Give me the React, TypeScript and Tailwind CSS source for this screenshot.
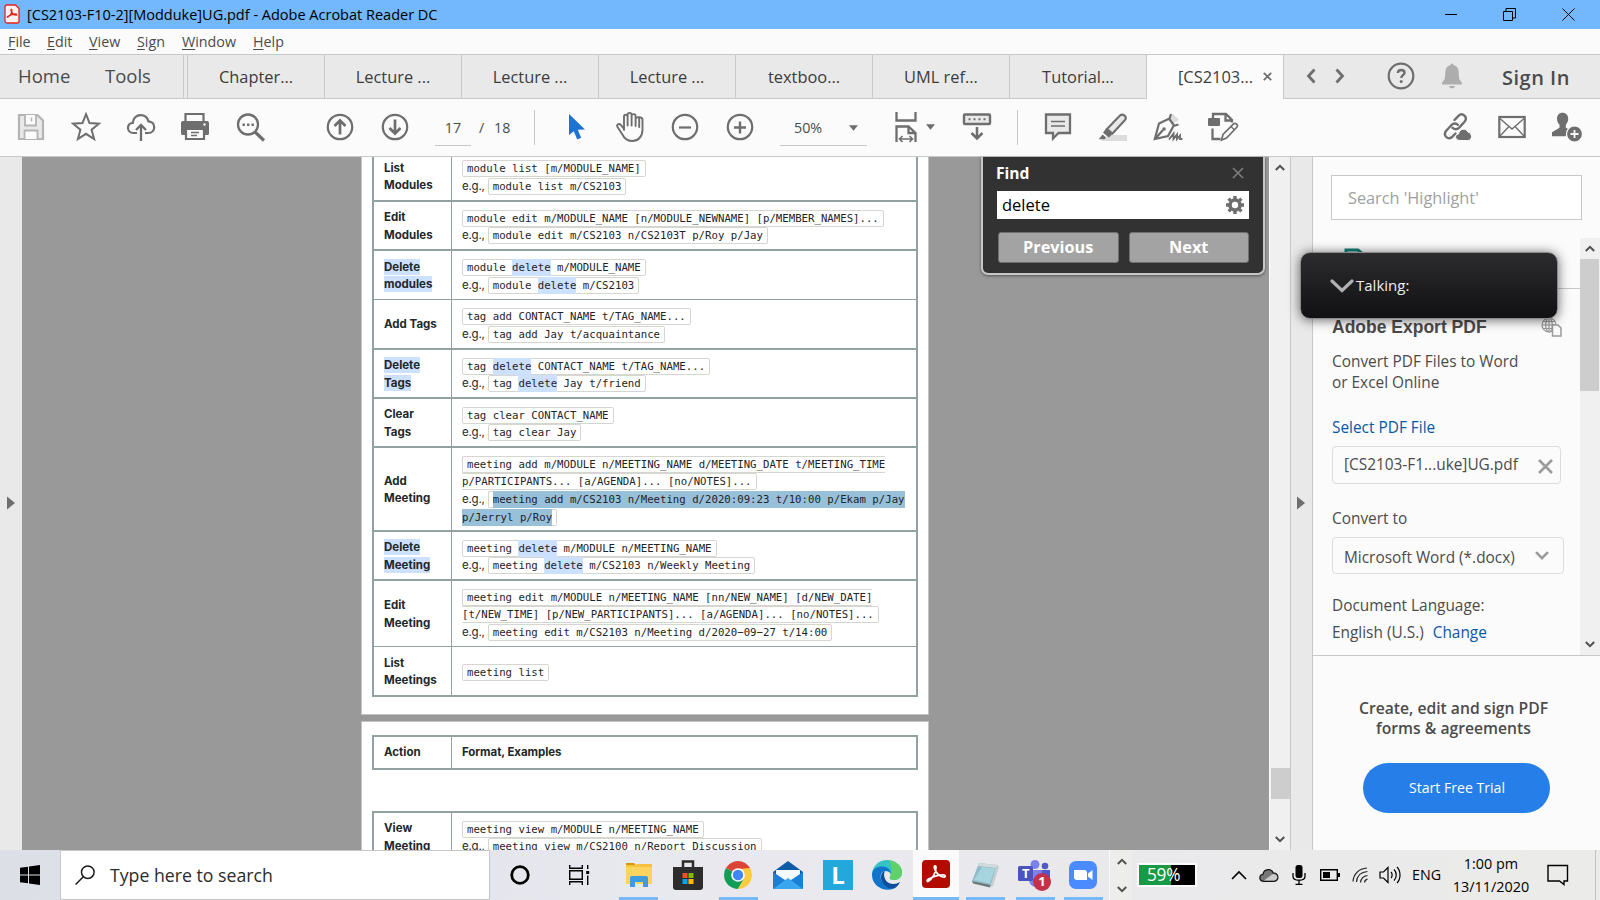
import type { ReactNode } from "react";

const G = "#6e6e6e";

type SvgProps = { w: number; h: number; cls?: string; children: ReactNode };
const Svg = ({ w, h, cls = "", children }: SvgProps) => (
  <svg width={w} height={h} viewBox={`0 0 ${w} ${h}`} fill="none" className={`block shrink-0 ${cls}`}>
    {children}
  </svg>
);

const Hit = ({ children }: { children: ReactNode }) => <span className="bg-[#cce0ff] py-[2px]">{children}</span>;
const Sel = ({ children }: { children: ReactNode }) => <span className="bg-[#99c0d9] py-[2px]">{children}</span>;
const Code = ({ children }: { children: ReactNode }) => (
  <code className="rounded-[2px] border border-[#d6d6d0] px-[4px] py-px font-['DejaVu_Sans_Mono',monospace] text-[10.700px] leading-[10px] text-[#1f2428]">
    {children}
  </code>
);
const Eg = () => <span className="mr-[3px] font-['Inter',sans-serif] text-[11.5px] tracking-[-0.2px]">e.g.,</span>;

type Row = { label: string[]; hit?: boolean; cls: string; body: ReactNode };

const rows: Row[] = [
  {
    label: ["List", "Modules"],
    cls: "h-[50px] border-b-2",
    body: (<><Code>module list [m/MODULE_NAME]</Code><br /><Eg /><Code>module list m/CS2103</Code></>),
  },
  {
    label: ["Edit", "Modules"],
    cls: "h-[49px] border-b-2",
    body: (<><Code>module edit m/MODULE_NAME [n/MODULE_NEWNAME] [p/MEMBER_NAMES]...</Code><br /><Eg /><Code>module edit m/CS2103 n/CS2103T p/Roy p/Jay</Code></>),
  },
  {
    label: ["Delete", "modules"],
    hit: true,
    cls: "h-[49px] border-b",
    body: (<><Code>module <Hit>delete</Hit> m/MODULE_NAME</Code><br /><Eg /><Code>module <Hit>delete</Hit> m/CS2103</Code></>),
  },
  {
    label: ["Add Tags"],
    cls: "h-[50px] border-b-2",
    body: (<><Code>tag add CONTACT_NAME t/TAG_NAME...</Code><br /><Eg /><Code>tag add Jay t/acquaintance</Code></>),
  },
  {
    label: ["Delete", "Tags"],
    hit: true,
    cls: "h-[49px] border-b-2",
    body: (<><Code>tag <Hit>delete</Hit> CONTACT_NAME t/TAG_NAME...</Code><br /><Eg /><Code>tag <Hit>delete</Hit> Jay t/friend</Code></>),
  },
  {
    label: ["Clear", "Tags"],
    cls: "h-[49px] border-b-2",
    body: (<><Code>tag clear CONTACT_NAME</Code><br /><Eg /><Code>tag clear Jay</Code></>),
  },
  {
    label: ["Add", "Meeting"],
    cls: "h-[84px] border-b-2",
    body: (
      <>
        <Code>meeting add m/MODULE n/MEETING_NAME d/MEETING_DATE t/MEETING_TIME<br />p/PARTICIPANTS... [a/AGENDA]... [no/NOTES]...</Code>
        <br /><Eg />
        <Code><Sel>meeting add m/CS2103 n/Meeting d/2020:09:23 t/10:00 p/Ekam p/Jay<br />p/Jerryl p/Roy</Sel></Code>
      </>
    ),
  },
  {
    label: ["Delete", "Meeting"],
    hit: true,
    cls: "h-[49px] border-b-2",
    body: (<><Code>meeting <Hit>delete</Hit> m/MODULE n/MEETING_NAME</Code><br /><Eg /><Code>meeting <Hit>delete</Hit> m/CS2103 n/Weekly Meeting</Code></>),
  },
  {
    label: ["Edit", "Meeting"],
    cls: "h-[66px] border-b",
    body: (
      <>
        <Code>meeting edit m/MODULE n/MEETING_NAME [nn/NEW_NAME] [d/NEW_DATE]<br />[t/NEW_TIME] [p/NEW_PARTICIPANTS]... [a/AGENDA]... [no/NOTES]...</Code>
        <br /><Eg /><Code>meeting edit m/CS2103 n/Meeting d/2020−09−27 t/14:00</Code>
      </>
    ),
  },
  { label: ["List", "Meetings"], cls: "h-[50px] border-b-2", body: <Code>meeting list</Code> },
];

const TableRow = ({ label, hit, cls, body }: Row) => (
  <div className={`flex shrink-0 border-[#93a1a1] ${cls}`}>
    <div className="flex w-[78px] shrink-0 flex-col justify-center border-r border-[#93a1a1] pl-[10px] pt-[2px] font-['Inter',sans-serif] text-[11.5px] font-bold leading-[17.2px] text-[#22272b]">
      {label.map((l) => (
        <div key={l}><span className={hit ? "bg-[#cce0ff] py-px" : ""}>{l}</span></div>
      ))}
    </div>
    <div className="flex items-center whitespace-nowrap pl-[10px] pt-[2px] text-[11.5px] leading-[17.2px] text-[#24292e]">
      <div>{body}</div>
    </div>
  </div>
);

const Pages = () => (
  <div className="flex h-full w-[568px] flex-col">
    <div className="flex h-[558px] shrink-0 flex-col overflow-hidden border-x border-b border-[#c4c4c4] bg-white px-[10px]">
      <div className="-mt-[5px] border-x-2 border-[#93a1a1]">
        {rows.map((r, i) => <TableRow key={i} {...r} />)}
      </div>
    </div>
    <div className="mt-[6px] flex min-h-0 flex-1 flex-col overflow-hidden border-x border-t border-[#c4c4c4] bg-white px-[10px] pt-[13px]">
      <div className="flex h-[35px] shrink-0 border-2 border-[#93a1a1] font-['Inter',sans-serif] text-[11.5px] font-bold text-[#22272b]">
        <div className="flex w-[78px] items-center border-r border-[#93a1a1] pl-[10px]">Action</div>
        <div className="flex items-center pl-[10px] tracking-[-0.05px]">Format, Examples</div>
      </div>
      <div className="mt-[41px] shrink-0 border-x-2 border-t-2 border-[#93a1a1]">
        <TableRow label={["View", "Meeting"]} cls="h-[49px] border-b-2" body={<><Code>meeting view m/MODULE n/MEETING_NAME</Code><br /><Eg /><Code>meeting view m/CS2100 n/Report Discussion</Code></>} />
      </div>
    </div>
  </div>
);

const ScrollArrow = ({ up = false }: { up?: boolean }) => (
  <Svg w={10} h={7}>
    <path d={up ? "M0.8 6L5 1.8L9.2 6" : "M0.8 1L5 5.2L9.2 1"} stroke="#505050" strokeWidth="2" />
  </Svg>
);

const TitleBar = () => (
  <header className="flex h-[29px] shrink-0 items-center bg-[#73b7fc] pl-[4px] text-black">
    <Svg w={16} h={20} cls="-mt-[1px]">
      <path d="M3 1h8.5L15 4.500V17a2 2 0 0 1-2 2H3a2 2 0 0 1-2-2V3a2 2 0 0 1 2-2Z" fill="#fff2f0" stroke="#e1251b" strokeWidth="1.300" />
      <path d="M3.800 13.200c2.300-1.200 4.300-4.800 4.100-7.200-.2-1.200-1.200-.8-.9.400.5 2.500 3 4.600 5 4.800 1.100 0 .8-1.200-.4-1.200-2.300 0-5 .8-7.600 2.200-.9.500-.8 1.200-.2 1Z" stroke="#e1251b" strokeWidth="1.300" />
    </Svg>
    <div className="ml-[7px] text-[14.500px]">[CS2103-F10-2][Modduke]UG.pdf - Adobe Acrobat Reader DC</div>
    <div className="ml-auto flex items-center pr-[25px]">
      <Svg w={12} h={12}><path d="M0 5.500h12" stroke="#000" /></Svg>
      <Svg w={13} h={13} cls="ml-[46px]"><path d="M.5 3.500h9v9h-9ZM3 3.500V.5h9.500V10H10" stroke="#000" /></Svg>
      <Svg w={13} h={13} cls="ml-[46px]"><path d="M.5.5l12 12M12.500.5l-12 12" stroke="#000" /></Svg>
    </div>
  </header>
);

const menu: [string, string, string][] = [
  ["F", "ile", "w-[39px]"], ["E", "dit", "w-[42px]"], ["V", "iew", "w-[48px]"],
  ["S", "ign", "w-[45px]"], ["W", "indow", "w-[71px]"], ["H", "elp", "w-[40px]"],
];

const MenuBar = () => (
  <nav className="flex h-[25px] shrink-0 items-center bg-[#fbfbfb] pl-[8px] text-[14.300px] text-[#4b4b4b]">
    {menu.map(([a, b, w]) => (
      <div key={b} className={`shrink-0 ${w}`}><span className="underline underline-offset-2">{a}</span>{b}</div>
    ))}
  </nav>
);

const tabs = ["Chapter...", "Lecture ...", "Lecture ...", "Lecture ...", "textboo...", "UML ref...", "Tutorial..."];

const TabBar = () => (
  <div className="flex h-[45px] shrink-0 border-t border-[#c8c8c8] bg-[#e9e9e9] text-[#4b4b4b]">
    <div className="flex w-[184px] shrink-0 items-center border-b border-r border-[#c8c8c8] pl-[18px] pb-[2px] text-[18.5px]">
      <span className="w-[87px]">Home</span><span>Tools</span>
    </div>
    <div className="w-[4px] shrink-0 border-b border-r border-[#c8c8c8]" />
    {tabs.map((t, i) => (
      <div key={i} className="flex w-[137px] shrink-0 items-center justify-center border-b border-r border-[#c8c8c8] pt-[2px] text-[16.4px] text-[#3c3c3c]">{t}</div>
    ))}
    <div className="flex w-[137px] shrink-0 items-center border-r border-[#c8c8c8] bg-[#fbfbfb] pl-[31px] text-[16.4px] text-[#3c3c3c]">
      <span className="w-[84px] pt-px">[CS2103...</span>
      <Svg w={9} h={9} cls="-mt-[2px] ml-px"><path d="M.8.8l7.400 7.400M8.200.8L.8 8.200" stroke={G} strokeWidth="1.800" /></Svg>
    </div>
    <div className="flex flex-1 items-center border-b border-[#c8c8c8]">
      <Svg w={10} h={16} cls="ml-[22px] -mt-[2px]"><path d="M8.500 1.500L2.500 8l6 6.500" stroke={G} strokeWidth="2.800" /></Svg>
      <Svg w={10} h={16} cls="ml-[19px] -mt-[2px]"><path d="M1.500 1.500L7.500 8l-6 6.500" stroke={G} strokeWidth="2.800" /></Svg>
      <Svg w={28} h={28} cls="ml-[42px] -mt-[2px]">
        <circle cx="14" cy="14" r="12.300" stroke={G} strokeWidth="2.200" />
        <path d="M10.800 11c.2-2 1.600-3 3.400-3 1.900 0 3.300 1 3.300 2.700 0 2.500-3.200 2.500-3.200 5.300" stroke={G} strokeWidth="2.400" />
        <circle cx="14.200" cy="19.500" r="1.500" fill={G} />
      </Svg>
      <Svg w={22} h={26} cls="ml-[26px] -mt-px">
        <path d="M11 .5a1.500 1.500 0 0 1 1.500 1.600C16 3 17.700 5.600 17.700 9c0 6 .8 8.500 3.300 10.500v2H1v-2C3.500 17.500 4.300 15 4.300 9c0-3.400 1.700-6 5.200-6.900A1.500 1.500 0 0 1 11 .5ZM8 23h6c-.4 1.500-1.500 2.300-3 2.300S8.400 24.500 8 23Z" fill="#adadad" />
      </Svg>
      <span className="ml-[39px] mt-[3px] text-[20px] font-semibold tracking-[0.5px]">Sign In</span>
    </div>
  </div>
);

const Caret = ({ cls }: { cls: string }) => <Svg w={9} h={6} cls={cls}><path d="M0 .3h9L4.500 5.700Z" fill={G} /></Svg>;

const Toolbar = () => (
  <div className="flex h-[58px] shrink-0 items-center border-b border-[#c8c8c8] bg-[#fbfbfb] pb-px text-[14.300px] text-[#4b4b4b]">
    <Svg w={28} h={28} cls="ml-[17px]">
      <path d="M2 2h18.500L26 7.500V26H2Z" fill="#e9e9e9" stroke="#b4b4b4" strokeWidth="2.200" />
      <path d="M8 2v10.500h11V2M7.500 26V17.500h13V26" fill="#fbfbfb" stroke="#b4b4b4" strokeWidth="1.800" />
      <path d="M14.500 4.500v4" stroke="#b4b4b4" strokeWidth="1.500" />
    </Svg>
    <Svg w={30} h={30} cls="ml-[26px]">
      <path d="M15 2.200l3.500 8.900 9.500.6-7.400 6 2.500 9.300L15 21.800 6.900 27l2.500-9.300-7.400-6 9.500-.6Z" stroke={G} strokeWidth="2" />
    </Svg>
    <Svg w={30} h={30} cls="ml-[25px]">
      <path d="M11 21H7.500C4.200 21 2 18.800 2 16s2-4.800 4.700-5C7 6.200 10.500 3.200 14.500 3.200c4 0 7 2.500 7.900 6.100C26 9.500 28.200 12 28.200 15.200c0 3.300-2.400 5.800-5.700 5.800H19" stroke={G} strokeWidth="2.200" />
      <path d="M15 29V13.500M10 18l5-5 5 5" stroke={G} strokeWidth="2.300" />
    </Svg>
    <Svg w={30} h={30} cls="ml-[24px]">
      <path d="M5.500 9V2h18v7" stroke={G} strokeWidth="2.200" />
      <path d="M3 9h24a2 2 0 0 1 2 2v10.500a1.500 1.500 0 0 1-1.500 1.500H25V17H5v6H2.500A1.500 1.500 0 0 1 1 21.500V11a2 2 0 0 1 2-2Z" fill={G} />
      <path d="M6 17h18v10H6Z" fill="#fbfbfb" stroke={G} strokeWidth="2.200" />
      <path d="M11 20.500h8M11 23.500h6" stroke={G} strokeWidth="1.300" /><circle cx="24.500" cy="12.500" r="1.200" fill="#fbfbfb" />
    </Svg>
    <Svg w={30} h={30} cls="ml-[26px]">
      <circle cx="12" cy="12.500" r="10" stroke={G} strokeWidth="2.300" />
      <path d="M19 20l9 8.500" stroke={G} strokeWidth="3.200" />
      <path d="M6.500 11.500h2.400v2.400H6.500zM11 11.500h2.400v2.400H11zM15.500 11.500h2.400v2.400h-2.400z" fill={G} />
    </Svg>
    <Svg w={28} h={28} cls="ml-[60px]">
      <circle cx="14" cy="14" r="12.200" stroke={G} strokeWidth="2.200" />
      <path d="M14 21.500V8M8.500 13l5.500-5.500 5.500 5.500" stroke={G} strokeWidth="2.700" />
    </Svg>
    <Svg w={28} h={28} cls="ml-[27px]">
      <circle cx="14" cy="14" r="12.200" stroke={G} strokeWidth="2.200" />
      <path d="M14 6.500V20M8.500 15l5.500 5.500 5.500-5.500" stroke={G} strokeWidth="2.700" />
    </Svg>
    <div className="ml-[26px] mt-[2px] flex h-[35px] w-[36px] items-center justify-center border-b border-[#c8c8c8]">17</div>
    <span className="ml-[8px] w-[15px] pt-px">/</span><span className="w-[18px] pt-px">18</span>
    <div className="ml-[22px] h-[35px] w-px bg-[#c8c8c8]" />
    <Svg w={18} h={28} cls="ml-[33px]"><path d="M1 1l16 15.500-7.200.3 3.400 8-4 1.700-3.400-8.200L1 22Z" fill="#1f73cf" /></Svg>
    <Svg w={30} h={32} cls="ml-[29px]">
      <path d="M9 19V5.600c0-2.500 3.600-2.500 3.600 0M12.600 14.500V3.800c0-2.600 4-2.600 4 0v10.700M16.600 5c0-2.500 4-2.500 4 0v10M20.600 8c0-2.400 6.900-2.800 6.900.8v10c0 7-4.500 11.200-10.200 11.200-4.500 0-7.700-2-9.600-6l-5.300-8.300c-1-2 1.600-3.800 3.400-1.900L9 18M24.200 7v9" stroke={G} strokeWidth="1.900" strokeLinecap="round" />
    </Svg>
    <Svg w={28} h={28} cls="ml-[26px]">
      <circle cx="14" cy="14" r="12.200" stroke={G} strokeWidth="2.200" /><path d="M8 14.500h12" stroke={G} strokeWidth="2.200" />
    </Svg>
    <Svg w={28} h={28} cls="ml-[27px]">
      <circle cx="14" cy="14" r="12.200" stroke={G} strokeWidth="2.200" /><path d="M8 14.500h12M14 8.500v12" stroke={G} strokeWidth="2.400" />
    </Svg>
    <div className="ml-[26px] mt-[2px] flex h-[35px] w-[87px] items-center border-b border-[#c8c8c8] pl-[14px]">
      <span className="w-[55px]">50%</span><Caret cls="" />
    </div>
    <Svg w={24} h={32} cls="ml-[27px]">
      <path d="M2.500 1v8.500h19V1M2.500 31V15.500h12L21.500 22v9M14.500 15.500V22h7" stroke={G} strokeWidth="2.300" />
      <path d="M6 28h12M8.500 25l-3 3 3 3M15.500 25l3 3-3 3" stroke={G} strokeWidth="1.600" />
    </Svg>
    <Caret cls="ml-[8px]" />
    <Svg w={30} h={30} cls="ml-[27px]">
      <rect x="2" y="2.500" width="26" height="9.500" rx="1" fill="#e9e9e9" stroke={G} strokeWidth="2.400" />
      <path d="M6.500 7.300h2M11.500 7.300h2M16.500 7.300h2M21.500 7.300h2" stroke={G} strokeWidth="2" />
      <path d="M15 15v11M9.500 21l5.500 5.500 5.500-5.500" stroke={G} strokeWidth="2.500" />
    </Svg>
    <div className="ml-[25px] h-[35px] w-px bg-[#c8c8c8]" />
    <Svg w={28} h={30} cls="ml-[26px]">
      <path d="M2 2.500h24V21H14.500L9 26.500V21H2Z" fill="#e9e9e9" stroke={G} strokeWidth="2.300" />
      <path d="M7 9.500h14M7 14h14" stroke={G} strokeWidth="1.600" />
    </Svg>
    <Svg w={30} h={30} cls="ml-[26px]">
      <path d="M10 23h19v6H3Z" fill="#dcdcdc" />
      <path d="M9 17L22 3.500c2.800-2.600 7.500 1.500 5 4.500L14.500 21.500Z" fill="#e9e9e9" stroke={G} strokeWidth="2.100" />
      <path d="M8 16.500l6.500 5.500-3.500 3.500-6-4.800ZM4.500 22.500l3.500 3-1.500 1.800H.8Z" fill={G} />
    </Svg>
    <Svg w={30} h={30} cls="ml-[25px]">
      <path d="M15 6l5 5.500 6-3.500-6-6Z" fill="#dcdcdc" />
      <path d="M18 2l-1.500 4.500L6 11.500 1.800 27 15 24l5.500-10 5-1.500M16 6.500l5 7M2 27l8-9" stroke={G} strokeWidth="2.200" />
      <circle cx="11" cy="17" r="1.800" fill={G} />
      <path d="M16 27.500l4.500-6v5.500l3.500-4.500v4.500l3-3.500v3.500h2.500" stroke={G} strokeWidth="1.900" />
    </Svg>
    <Svg w={32} h={30} cls="ml-[24px]">
      <path d="M6 6V2h13l6 6v2.500M18.500 2v6.500H25M5.500 16.500V27h8" stroke={G} strokeWidth="2.300" />
      <rect x="1" y="6" width="12" height="8" rx="1" fill={G} />
      <path d="M14.500 28l1.500-5.500L26.500 12c2-1.500 5 1 3.500 3L19.500 26Z" fill="#fbfbfb" stroke={G} strokeWidth="1.700" /><path d="M24 14.500l3.500 3.500" stroke={G} strokeWidth="1.300" />
    </Svg>
    <Svg w={32} h={30} cls="ml-auto">
      <g stroke={G} strokeWidth="2.400" strokeLinecap="round">
        <path d="M13.500 8l4-4.200c4-3.800 9.800 1.500 6 6l-5.500 6c-2 2-5 1.800-6.500 0" />
        <path d="M14.500 21.500l-3.500 3.500c-4 3.500-9.300-1.500-6-6l5.500-6c2-2 4.800-2 6.300-.2" />
      </g>
      <path d="M19 28.500c-5.500 0-5.800-6-1.500-6.500.5-5.500 7.500-6.500 9.500-2 4.500 1 5 8.500-.5 8.500Z" fill={G} stroke="#fbfbfb" strokeWidth="1" />
    </Svg>
    <Svg w={28} h={24} cls="ml-[25px]">
      <rect x="1.300" y="2" width="25.400" height="20" stroke={G} strokeWidth="2.200" />
      <path d="M2 3.500l12 10.500L26 3.500M2 21l8.500-9M26 21l-8.500-9" stroke={G} strokeWidth="1.400" />
    </Svg>
    <Svg w={32} h={30} cls="ml-[25px] mr-[17px]">
      <path d="M11.500.8c3.600 0 5.700 2.600 5.700 6 0 2.600-1 4.300-2.400 6v3l4.500 2.500-5 6H1v-4l7.500-4.500v-3C7 11.100 6 9.400 6 6.800c0-3.400 2-6 5.500-6Z" fill={G} />
      <circle cx="23.500" cy="22" r="8" fill={G} stroke="#fbfbfb" strokeWidth="1.200" />
      <path d="M19.500 22h8M23.500 18v8" stroke="#fbfbfb" strokeWidth="1.800" />
    </Svg>
  </div>
);

const FindPanel = () => (
  <div className="absolute right-[4px] top-0 h-[118px] w-[284px] rounded-b-[7px] border-x-2 border-b-2 border-[#c6c6c6] bg-[#323232] px-[14px] shadow-[0_1px_3px_#555]">
    <div className="flex h-[34px] items-center justify-between pb-px pr-[5px] text-[15.600px] font-bold text-white">
      <span className="-ml-px">Find</span>
      <Svg w={12} h={12} cls="-mt-[2px]"><path d="M1 1l10 10M11 1L1 11" stroke="#7c7c7c" strokeWidth="1.700" /></Svg>
    </div>
    <div className="flex h-[28px] w-[252px] items-center justify-between bg-white pl-[5px] pr-[5px] text-[16.500px] text-black">
      <span>delete</span>
      <Svg w={18} h={18}>
        <circle cx="9" cy="9" r="5" stroke={G} strokeWidth="3.600" />
        <g stroke={G} strokeWidth="3.400"><path d="M9 0v3M9 15v3M0 9h3M15 9h3M2.600 2.600l2 2M13.400 13.400l2 2M15.400 2.600l-2 2M4.600 13.400l-2 2" /></g>
      </Svg>
    </div>
    <div className="mt-[13px] flex gap-[10px] pl-px text-[16.300px] font-bold text-white">
      <div className="flex h-[31px] w-[121px] items-center justify-center rounded-[3px] border border-[#6f6f6f] bg-[#a3a3a3]">Previous</div>
      <div className="flex h-[31px] w-[121px] items-center justify-center rounded-[3px] border border-[#6f6f6f] bg-[#a3a3a3]">Next</div>
    </div>
  </div>
);

const SidePanel = () => (
  <aside className="flex w-[287px] shrink-0 flex-col bg-[#fbfbfb] text-[15.400px] text-[#4b4b4b]">
    <div className="flex h-[81px] shrink-0 pl-[18px] pt-[18px]">
      <div className="flex h-[45px] w-[251px] items-center border border-[#c8c8c8] bg-white pl-[16px] pt-[2px] text-[16.300px] text-[#a0a0a0]">Search 'Highlight'</div>
    </div>
    <div className="flex h-[417px] shrink-0">
      <div className="flex w-[267px] shrink-0 flex-col pl-[19px]">
        <div className="-ml-[19px] flex h-[51px] shrink-0 items-start border-b border-[#c8c8c8] pl-[31px] pt-[10px]">
          <Svg w={22} h={26}><path d="M2 25V2h12l6 5v18Z" stroke="#13807a" strokeWidth="3" /></Svg>
        </div>
        <div className="mt-[26px] flex h-[24px] items-center justify-between pr-[18px] font-['Liberation_Sans',Arial,sans-serif] text-[17.500px] font-bold">
          <span>Adobe Export PDF</span>
          <Svg w={21} h={20}>
            <g stroke="#9a9a9a" strokeWidth="1.200"><circle cx="8" cy="8" r="7" /><ellipse cx="8" cy="8" rx="3.300" ry="7" /><path d="M1 8h14M2 4.500h12M2 11.500h12M8 1v14" /></g>
            <path d="M11.500 8h5.500l3 3v8h-8.500Z" fill="#fbfbfb" stroke="#9a9a9a" strokeWidth="1.500" />
          </Svg>
        </div>
        <div className="mt-[12px] leading-[21px]">Convert PDF Files to Word<br />or Excel Online</div>
        <div className="mt-[24px] leading-[21px] text-[#0a57a6]">Select PDF File</div>
        <div className="mt-[8px] flex h-[38px] w-[229px] shrink-0 items-center justify-between rounded-[4px] border border-[#dcdcdc] pl-[11px] pr-[7px]">
          <span>[CS2103-F1...uke]UG.pdf</span>
          <Svg w={15} h={15} cls="mt-[2px]"><path d="M1 1l13 13M14 1L1 14" stroke="#9b9b9b" strokeWidth="2.600" /></Svg>
        </div>
        <div className="mt-[24px] leading-[21px]">Convert to</div>
        <div className="mt-[8px] flex h-[37px] w-[232px] shrink-0 items-center justify-between rounded-[4px] border border-[#dcdcdc] pl-[11px] pr-[14px]">
          <span className="mt-[5px]">Microsoft Word (*.docx)</span>
          <Svg w={14} h={9}><path d="M1 1.200l6 6 6-6" stroke="#9b9b9b" strokeWidth="2.600" /></Svg>
        </div>
        <div className="mt-[21px] leading-[21px]">Document Language:</div>
        <div className="mt-[6px] leading-[21px]">English (U.S.)<span className="ml-[9px] text-[#0a57a6]">Change</span></div>
      </div>
      <div className="flex w-[20px] flex-col items-center bg-[#f0f0f0]">
        <div className="flex h-[21px] items-center"><ScrollArrow up /></div>
        <div className="h-[132px] w-full border-r border-[#f0f0f0] bg-[#cdcdcd]" />
        <div className="mb-[7px] mt-auto"><ScrollArrow /></div>
      </div>
    </div>
    <div className="flex flex-1 flex-col items-center border-t border-[#c8c8c8] pr-[1px]">
      <div className="mt-[42px] pr-[5px] text-center text-[15.700px] font-semibold leading-[20px]">Create, edit and sign PDF<br />forms &amp; agreements</div>
      <div className="mt-[25px] flex h-[50px] w-[187px] items-center justify-center rounded-full bg-[#267fe8] pl-[2px] text-[14.100px] text-white">Start Free Trial</div>
    </div>
  </aside>
);

const TalkingPopup = () => (
  <div className="absolute left-[1300px] top-[252px] flex h-[67px] w-[258px] items-center rounded-[10px] border border-[#8a8a8a] bg-linear-to-b from-[#2c2c2e] to-[#111113] pl-[29px] text-[15px] text-[#ececec] shadow-[0_1px_12px_rgba(0,0,0,0.6)]">
    <Svg w={24} h={14}><path d="M2 2l10 9.500L22 2" stroke="#b0b0b0" strokeWidth="3.200" strokeLinecap="round" /></Svg>
    <span className="ml-[2px]">Talking:</span>
  </div>
);

const Slot = ({ cls = "", active = false, children }: { cls?: string; active?: boolean; children: ReactNode }) => (
  <div className={`flex h-full shrink-0 flex-col items-center ${cls}`}>
    <div className="flex h-[47px] items-center pt-[3px]">{children}</div>
    <div className={active ? "h-[3px] w-[39px] bg-[#76b9f8]" : "h-[3px]"} />
  </div>
);

const Taskbar = () => (
  <footer className="flex h-[50px] shrink-0 items-center bg-linear-to-r from-[#dcdfe6] via-[#e8e8ef] via-40% to-[#ebebe9] text-black">
    <div className="flex w-[60px] shrink-0 justify-center">
      <Svg w={20} h={20}><path d="M0 2.800L8 1.700V9.500H0ZM9 1.500L20 0v9.500H9ZM0 10.500h8v7.800L0 17.200ZM9 10.500h11V20L9 18.500Z" fill="#000" /></Svg>
    </div>
    <div className="flex h-full w-[430px] shrink-0 items-center border border-[#c6c6c6] bg-white pl-[14px] text-[17.700px] text-[#2b2b2b]">
      <Svg w={20} h={20}><circle cx="12.800" cy="7.200" r="6.300" stroke="#1b1b1b" strokeWidth="1.500" /><path d="M8.300 11.800L.6 19.500" stroke="#1b1b1b" strokeWidth="1.500" /></Svg>
      <span className="ml-[15px]">Type here to search</span>
    </div>
    <Slot cls="w-[60px]"><Svg w={22} h={22}><circle cx="11" cy="11" r="8.300" stroke="#000" strokeWidth="2.800" /></Svg></Slot>
    <Slot cls="w-[59px]">
      <Svg w={21} h={20}><path d="M.7 0v3.300h12.600V0M.7 20v-3.300h12.600V20M.7 5.700h12.600v8.600H.7ZM18.700 0v4M18.700 10.500V20" stroke="#000" strokeWidth="1.400" /><path d="M17.200 6h3v3h-3z" fill="#000" /></Svg>
    </Slot>
    <Slot cls="w-[59px]" active>
      <Svg w={28} h={26}>
        <path d="M1 1h8l2.500 3H1Z" fill="#d9970d" /><path d="M1 3h26v19H1Z" fill="#fbd35f" /><path d="M1 3h9l2-1h15v3H1Z" fill="#f5c33b" />
        <path d="M5 25V15.500A2 2 0 0 1 7 14h14a2 2 0 0 1 2 1.500V25h-5v-5h-8v5Z" fill="#3e9bdd" />
      </Svg>
    </Slot>
    <Slot cls="w-[40px]">
      <Svg w={30} h={32}>
        <path d="M10 9V2.500h10V9" stroke="#2b2b2b" strokeWidth="2.500" /><path d="M0 8h30v20a3 3 0 0 1-3 3H3a3 3 0 0 1-3-3Z" fill="#2c2c2c" />
        <path d="M9.500 14h5v5h-5z" fill="#f25022" /><path d="M15.500 14h5v5h-5z" fill="#7fba00" /><path d="M9.500 20h5v5h-5z" fill="#00a4ef" /><path d="M15.500 20h5v5h-5z" fill="#ffb900" />
      </Svg>
    </Slot>
    <Slot cls="w-[60px]" active>
      <Svg w={28} h={28}>
        <path d="M14 14L1.900 7A14 14 0 0 1 26.100 7Z" fill="#dc4437" /><path d="M14 14L1.900 7A14 14 0 0 0 14 28L20 17.500Z" fill="#109d58" />
        <path d="M14 7h12.100A14 14 0 0 1 14 28l6-10.500Z" fill="#fdcb3e" /><path d="M14 7h12.100L14 8Z" fill="#dc4437" />
        <circle cx="14" cy="14" r="6.800" fill="#fff" /><circle cx="14" cy="14" r="5.200" fill="#4285f4" />
      </Svg>
    </Slot>
    <Slot cls="w-[40px]">
      <Svg w={30} h={28}>
        <path d="M0 11L15 0l15 11v17H0Z" fill="#0f5ba7" /><path d="M3 9h24v12H3Z" fill="#f3f8fc" /><path d="M0 11l15 10L0 28Z" fill="#1a80d6" /><path d="M30 11L15 21l15 7Z" fill="#1a80d6" /><path d="M0 28l15-11 15 11Z" fill="#3ba6f0" />
      </Svg>
    </Slot>
    <Slot cls="w-[60px]">
      <div className="flex h-[30px] w-[30px] items-center justify-center bg-[#23a8dc] text-[24px] font-bold leading-none text-white">L</div>
    </Slot>
    <Slot cls="w-[45px] pr-[7px]">
      <Svg w={30} h={30}>
        <path d="M15 0c8 0 15 5.500 15 12.500 0 5-4 7.500-8 7.500-3.500 0-5-1.500-4-3 1.500-2.500.5-6-4-6C7 11 0 15 0 15 0 6 7 0 15 0Z" fill="#36c3c4" />
        <path d="M17 .2C25 1.200 30 6.500 30 12.500c0 5-4 7.500-8 7.500-3.500 0-5-1.500-4-3 1.500-2.500 3-9-1-16.800Z" fill="#5fd167" />
        <path d="M0 15C0 9 5 6.500 10.500 6.500c5 0 8.500 3.500 8.500 7.500-1-2-3-3-5-3-5 0-6.500 5-4.500 9.500S18 27.500 22 28.500C12 32.500 0 26 0 15Z" fill="#0f74cc" />
        <path d="M9.500 20.500C8 16 9.500 12 13 11c-2.500 4 0 13 8 13 3 0 5-1 7-2-1.500 3-3.500 5.500-6 6.500-6 .5-11-3.500-12.500-8Z" fill="#0c4f9a" />
      </Svg>
    </Slot>
    <div className="flex h-full w-[46px] shrink-0 flex-col items-center bg-[#fafafa]">
      <div className="flex h-[47px] items-center">
        <Svg w={28} h={28}>
          <rect width="28" height="28" rx="4" fill="#b30b00" />
          <path d="M6 21.500c4-2 8.500-9.500 8-14.500-.3-2-2.200-1.500-1.700.8 1 4.700 5.500 9 9.500 9.400 2.200 0 1.800-2.400-.6-2.400-4.500 0-9.500 1.500-14.700 4.200-1.800 1-1.700 3-.5 2.500Z" stroke="#fff" strokeWidth="1.700" />
        </Svg>
      </div>
      <div className="h-[3px] w-full bg-[#76b9f8]" />
    </div>
    <Slot cls="ml-[2px] w-[48px]" active>
      <Svg w={28} h={28}>
        <path d="M8 2l18 2-6 20L1 20Z" fill="#8fbcc8" /><path d="M8 2l18 2-1 3-18-2Z" fill="#d3dadc" /><path d="M11 6l13 1.500-5 15L3 19Z" fill="#a7d5df" /><path d="M1 20l19 4-1 2.500L2 22.500Z" fill="#6b797d" /><path d="M26 4l2 2-6 19-3 1.500Z" fill="#c7cdce" />
      </Svg>
    </Slot>
    <Slot cls="ml-px w-[50px]" active>
      <div className="relative">
        <Svg w={34} h={32}>
          <circle cx="17" cy="5.500" r="4.500" fill="#7b83eb" /><circle cx="27" cy="7" r="3.300" fill="#5059c9" /><path d="M11 11h14v10a7 7 0 0 1-14 0Z" fill="#7b83eb" /><path d="M24 11h8v8a5 5 0 0 1-8 3Z" fill="#5059c9" /><rect y="7" width="15" height="15" rx="1.500" fill="#4b53bc" />
        </Svg>
        <span className="absolute left-[4px] top-[5px] text-[13px] font-bold text-white">T</span>
        <span className="absolute left-[15px] top-[14px] flex h-[18px] w-[18px] items-center justify-center rounded-full bg-[#c4314b] text-[13px] font-bold text-white">1</span>
      </div>
    </Slot>
    <Slot cls="-ml-px w-[48px]" active>
      <Svg w={28} h={28}><rect width="28" height="28" rx="7" fill="#4a8cff" /><path d="M5 9h10a3 3 0 0 1 3 3v7H8a3 3 0 0 1-3-3ZM19 12.500L23.500 9v10L19 15.500Z" fill="#fff" /></Svg>
    </Slot>
    <div className="ml-[2px] flex h-full w-[23px] shrink-0 flex-col items-center justify-between border-l border-[#fafafa] bg-[#ededeb] pb-[7px] pl-[1px] pt-[8px]">
      <ScrollArrow up /><ScrollArrow />
    </div>
    <div className="ml-[5px] flex h-[24px] w-[60px] shrink-0 items-center border-2 border-[#fdfdfd] bg-linear-to-r from-[#179a46] from-58% to-black to-58% pl-[8px] text-[17.300px] tracking-[-0.3px] text-white">59%</div>
    <Svg w={16} h={10} cls="ml-[34px]"><path d="M1 9l7-7 7 7" stroke="#000" strokeWidth="1.600" /></Svg>
    <Svg w={20} h={14} cls="ml-[12px]"><path d="M5 13.300C-.5 13.300-.2 6.500 4 6.300 4.800.5 13 .2 14.300 5c5.500-.3 6.500 8.300.7 8.300Z" fill="#777" stroke="#111" strokeWidth="1.200" /><path d="M5 12.500l8-6c6-2 7 5.500 2 6Z" fill="#ccc" /></Svg>
    <Svg w={14} h={20} cls="ml-[13px]"><rect x="3.500" width="7" height="13" rx="2.500" fill="#000" /><path d="M1 8v3.500c0 5 12 5 12 0V8M7 15v4M3.500 19.300h7" stroke="#000" strokeWidth="1.300" /></Svg>
    <Svg w={20} h={12} cls="ml-[14px]"><path d="M.7.700h16.600v10.600H.7Z" stroke="#000" strokeWidth="1.400" /><path d="M3 3h7v6H3zM18 4h2v4h-2z" fill="#000" /></Svg>
    <Svg w={17} h={16} cls="ml-[12px]"><path d="M1 14.500C1.500 7 7 1.500 15 1M4.500 15c.5-6 4.500-10 11-10.500M8.500 15.500c.5-4 3-6.500 7-7M12.500 15.500c.3-2 1.300-3 3-3.300" stroke="#222" strokeWidth="1.200" /></Svg>
    <Svg w={22} h={18} cls="ml-[10px]"><path d="M1 6h3.500L9 1.500v15L4.500 12H1ZM12 6c1.500 1.500 1.500 4.500 0 6M15 3.500c3 3 3 8 0 11M18 1c4 4 4 12 0 16" stroke="#000" strokeWidth="1.200" /></Svg>
    <span className="ml-[11px] w-[30px] shrink-0 text-[14.300px]">ENG</span>
    <div className="ml-[9px] w-[80px] shrink-0 text-center text-[14.400px] leading-[23px]">1:00 pm<br />13/11/2020</div>
    <Svg w={22} h={22} cls="ml-[16px]"><path d="M1 1.500h19.500V17H17v3.500L12.500 17H1Z" stroke="#000" strokeWidth="1.400" /></Svg>
    <div className="ml-auto mr-[4px] h-full w-px shrink-0 bg-[#c2c2c2]" />
  </footer>
);

export default function App() {
  return (
    <div className="relative flex h-[900px] w-[1600px] flex-col overflow-hidden whitespace-nowrap bg-[#999] font-['Open_Sans','Noto_Sans',sans-serif]">
      <TitleBar />
      <MenuBar />
      <TabBar />
      <Toolbar />
      <main className="flex h-[693px] shrink-0">
        <div className="flex w-[22px] shrink-0 items-center bg-[#e9e9e9] pb-[2px] pl-[7px]">
          <Svg w={8} h={14}><path d="M0 .5l8 6.500-8 6.500Z" fill={G} /></Svg>
        </div>
        <section className="relative w-[1247px] shrink-0 bg-[#999] pl-[339px]">
          <Pages />
          <FindPanel />
        </section>
        <div className="flex w-[22px] shrink-0 flex-col items-center border-l border-r border-l-white border-r-[#c8c8c8] bg-[#f0f0f0] pt-[7px]">
          <ScrollArrow up />
          <div className="mt-[597px] h-[31px] w-[19px] bg-[#cdcdcd]" />
          <div className="mb-[7px] mt-auto"><ScrollArrow /></div>
        </div>
        <div className="flex w-[22px] shrink-0 items-center border-r border-[#c8c8c8] bg-[#e9e9e9] pb-[2px] pl-[6px]">
          <Svg w={8} h={14}><path d="M0 .5l8 6.500-8 6.500Z" fill={G} /></Svg>
        </div>
        <SidePanel />
      </main>
      <Taskbar />
      <TalkingPopup />
    </div>
  );
}
